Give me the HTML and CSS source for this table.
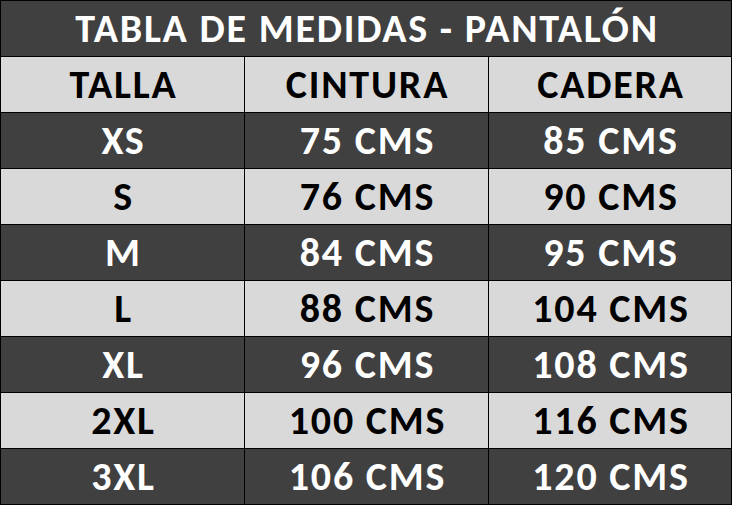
FILE: index.html
```html
<!DOCTYPE html>
<html lang="es">
<head>
<meta charset="utf-8">
<title>Tabla de medidas - Pantalón</title>
<link rel="stylesheet" href="styles.css">
</head>
<body>
<table class="sizes">
  <colgroup>
    <col class="c1"><col class="c2"><col class="c3">
  </colgroup>
  <tr class="title"><td colspan="3">TABLA DE MEDIDAS - PANTALÓN</td></tr>
  <tr class="light"><td>TALLA</td><td>CINTURA</td><td>CADERA</td></tr>
  <tr class="dark"><td>XS</td><td>75 CMS</td><td>85 CMS</td></tr>
  <tr class="light"><td>S</td><td>76 CMS</td><td>90 CMS</td></tr>
  <tr class="dark"><td>M</td><td>84 CMS</td><td>95 CMS</td></tr>
  <tr class="light"><td>L</td><td>88 CMS</td><td>104 CMS</td></tr>
  <tr class="dark"><td>XL</td><td>96 CMS</td><td>108 CMS</td></tr>
  <tr class="light"><td>2XL</td><td>100 CMS</td><td>116 CMS</td></tr>
  <tr class="dark"><td>3XL</td><td>106 CMS</td><td>120 CMS</td></tr>
</table>
</body>
</html>
```
FILE: styles.css
```css
html, body {
  margin: 0;
  padding: 0;
  background: #ffffff;
}
.sizes {
  border-collapse: collapse;
  table-layout: fixed;
  width: 732px;
  font-family: Carlito, Lato, "Liberation Sans", sans-serif;
  font-weight: bold;
  font-size: 40px;
  letter-spacing: 1.8px;
}
.c1 { width: 244px; }
.c2 { width: 244px; }
.c3 { width: 243px; }
.sizes td {
  border: 1px solid #000000;
  height: 55px;
  padding: 0 0 0 2px;
  text-align: center;
  vertical-align: middle;
  line-height: 1;
}
.title td, .dark td {
  background: #404040;
  color: #ffffff;
}
.light td {
  background: #d9d9d9;
  color: #000000;
}
```
